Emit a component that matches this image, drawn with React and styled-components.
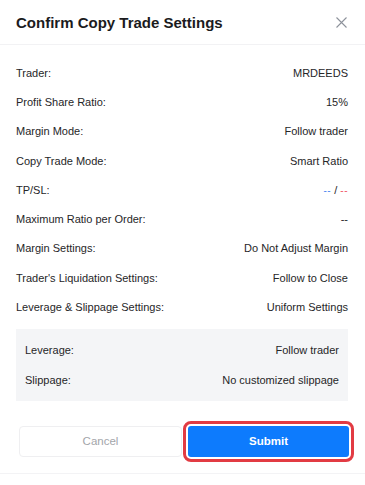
import React from 'react';
import styled, { createGlobalStyle } from 'styled-components';

const GlobalStyle = createGlobalStyle`
  html, body {
    margin: 0;
    padding: 0;
    background: #ffffff;
  }
  body {
    font-family: "Liberation Sans", Arial, sans-serif;
    color: #262628;
  }
`;

const Modal = styled.div`
  width: 365px;
  height: 485px;
  display: flex;
  flex-direction: column;
  background: #fff;
  box-sizing: border-box;
`;

const Header = styled.div`
  height: 45px;
  display: flex;
  align-items: center;
  justify-content: space-between;
  padding: 0 16px 0 16px;
  border-bottom: 1px solid #f2f2f4;
  box-sizing: border-box;
`;

const Title = styled.h1`
  margin: 0;
  font-size: 15px;
  font-weight: 700;
  color: #1b1b1d;
`;

const CloseButton = styled.button`
  border: none;
  background: none;
  padding: 0;
  width: 16px;
  height: 16px;
  display: flex;
  align-items: center;
  justify-content: center;
  cursor: pointer;
`;

const Body = styled.div`
  padding: 13px 17px 0 16px;
`;

const Row = styled.div`
  height: ${(p) => p.$height || 29.3}px;
  display: flex;
  align-items: center;
  justify-content: space-between;
  font-size: 11px;
  color: #262628;
`;

const Value = styled.span`
  color: #262628;
`;

const Dash = styled.span`
  color: ${(p) => p.$color};
  font-size: 10px;
  letter-spacing: 0.5px;
`;

const SubPanel = styled.div`
  margin-top: 7px;
  background: #f4f5f7;
  padding: 6px 9px 6px 9px;
`;

const Actions = styled.div`
  display: flex;
  gap: 6px;
  padding: 25px 16px 0 19px;
`;

const CancelButton = styled.button`
  flex: 1;
  height: 31px;
  border: 1px solid #efeff1;
  border-radius: 4px;
  background: #fff;
  color: #a3a5aa;
  font-family: inherit;
  font-size: 11.5px;
`;

const SubmitButton = styled.button`
  flex: 1;
  height: 31px;
  border: none;
  border-radius: 3px;
  background: #0d7bfd;
  color: #fff;
  font-family: inherit;
  font-size: 11.5px;
  font-weight: 700;
  outline: 3px solid #e23b43;
  outline-offset: 2px;
`;

const Footer = styled.div`
  margin-top: auto;
  height: 11px;
  border-top: 1px solid #f3f3f5;
`;

const rows = [
  ['Trader:', 'MRDEEDS'],
  ['Profit Share Ratio:', '15%'],
  ['Margin Mode:', 'Follow trader'],
  ['Copy Trade Mode:', 'Smart Ratio'],
  ['TP/SL:', 'tpsl'],
  ['Maximum Ratio per Order:', '--'],
  ['Margin Settings:', 'Do Not Adjust Margin'],
  ["Trader's Liquidation Settings:", 'Follow to Close'],
  ['Leverage & Slippage Settings:', 'Uniform Settings'],
];

const CloseIcon = () => (
  <svg width="11" height="11" viewBox="0 0 11 11">
    <path d="M0.5 0.5 L10.5 10.5 M10.5 0.5 L0.5 10.5" stroke="#8d929b" strokeWidth="1.1" fill="none" />
  </svg>
);

const App = () => {
  return (
    <>
      <GlobalStyle />
      <Modal>
        <Header>
          <Title>Confirm Copy Trade Settings</Title>
          <CloseButton aria-label="Close">
            <CloseIcon />
          </CloseButton>
        </Header>
        <Body>
          {rows.map(([label, value]) => (
            <Row key={label}>
              <span>{label}</span>
              {value === 'tpsl' ? (
                <Value>
                  <Dash $color="#4f86f0">--</Dash> / <Dash $color="#f0566a">--</Dash>
                </Value>
              ) : (
                <Value>{value}</Value>
              )}
            </Row>
          ))}
          <SubPanel>
            <Row $height={30}>
              <span>Leverage:</span>
              <Value>Follow trader</Value>
            </Row>
            <Row $height={30}>
              <span>Slippage:</span>
              <Value>No customized slippage</Value>
            </Row>
          </SubPanel>
        </Body>
        <Actions>
          <CancelButton>Cancel</CancelButton>
          <SubmitButton>Submit</SubmitButton>
        </Actions>
        <Footer />
      </Modal>
    </>
  );
};

export default App;
